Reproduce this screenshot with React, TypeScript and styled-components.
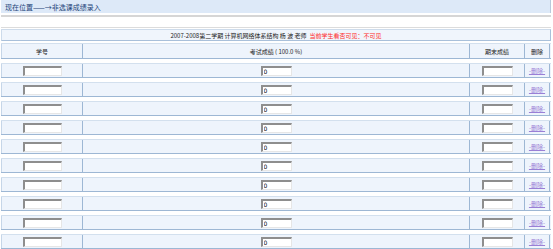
import React from "react";
import styled, { createGlobalStyle } from "styled-components";

const GlobalStyle = createGlobalStyle`
  html, body {
    margin: 0;
    padding: 0;
    background: #ffffff;
    font-family: "Noto Sans CJK SC", "DejaVu Sans", sans-serif;
  }
`;

const COLS = "82px 387px 55px 25px";
const ROW_COUNT = 10;

const Page = styled.div`
  width: 551px;
  padding-left: 1px;
  box-sizing: border-box;
`;

const LocationBar = styled.div`
  height: 13px;
  display: flex;
  align-items: center;
  padding-left: 4px;
  background: #dde9f8;
  border-right: 1px solid #b9c9dc;
  color: #1d4478;
  font-size: 7px;
`;

const Rule = styled.div<{ $h: number; $color: string; $mt?: number }>`
  height: ${p => p.$h}px;
  margin-top: ${p => p.$mt ?? 0}px;
  background: ${p => p.$color};
`;

const Blank = styled.div`
  height: 10px;
  background: #ffffff;
`;

const TitleRow = styled.div`
  height: 10px;
  margin-top: 1px;
  display: flex;
  align-items: center;
  justify-content: center;
  background: #f0f5fc;
  border: 1px solid #a9c0da;
  border-left-color: #cddbeb;
  border-top-color: #cddbeb;
  font-size: 6px;
  color: #222;
  white-space: pre;
`;

const Red = styled.span`
  color: #ff2a2a;
  margin-left: 3px;
`;

const Table = styled.div`
  display: flex;
  flex-direction: column;
  gap: 4px;
  margin-top: 2px;
`;

const Row = styled.div<{ $head?: boolean }>`
  display: grid;
  grid-template-columns: ${COLS};
  height: ${p => (p.$head ? 14 : 13)}px;
  background: #eef4fc;
  border-top: 1px solid #d3e0ee;
  border-bottom: 1px solid #9db7d4;
`;

const Cell = styled.div`
  display: flex;
  align-items: center;
  justify-content: center;
  border-right: 1px solid #9db7d4;
  font-size: 6px;
  color: #222;
  white-space: nowrap;
  overflow: hidden;
`;

const FirstCell = styled(Cell)`
  border-left: 1px solid #c6d6e8;
`;

const Box = styled.input<{ $w: number }>`
  box-sizing: border-box;
  width: ${p => p.$w}px;
  height: 10px;
  padding: 0 0 0 1px;
  margin: 0;
  background: #ffffff;
  border-style: solid;
  border-width: 2px 1px 1px 2px;
  border-color: #8e8e8e #e6e6e6 #e6e6e6 #8e8e8e;
  font-family: "DejaVu Sans", sans-serif;
  font-size: 6px;
  line-height: 8px;
  color: #000;
  outline: none;
`;

const DelLink = styled.a`
  color: #9a7fd6;
  font-size: 6px;
  text-decoration: underline;
  cursor: pointer;
  white-space: pre;
`;

export default function App() {
  const rows = Array.from({ length: ROW_COUNT }, (_, i) => i);

  return (
    <Page>
      <GlobalStyle />
      <LocationBar>现在位置——→非选课成绩录入</LocationBar>
      <Rule $h={2} $color="#d6d6d6" $mt={2} />
      <Blank />
      <Rule $h={1} $color="#dcdcdc" />
      <TitleRow>
        2007-2008第二学期 计算机网络体系结构 杨 波 老师
        <Red>当前学生看否可见：不可见</Red>
      </TitleRow>

      <Table>
        <Row $head>
          <FirstCell>学号</FirstCell>
          <Cell>考试成绩 ( 100.0 %)</Cell>
          <Cell>期末成绩</Cell>
          <Cell>删除</Cell>
        </Row>
        {rows.map(i => (
          <Row key={i}>
            <FirstCell>
              <Box $w={39} defaultValue="" />
            </FirstCell>
            <Cell>
              <Box $w={31} defaultValue="0" />
            </Cell>
            <Cell>
              <Box $w={31} defaultValue="" />
            </Cell>
            <Cell>
              <DelLink>-删除-</DelLink>
            </Cell>
          </Row>
        ))}
      </Table>
    </Page>
  );
}
